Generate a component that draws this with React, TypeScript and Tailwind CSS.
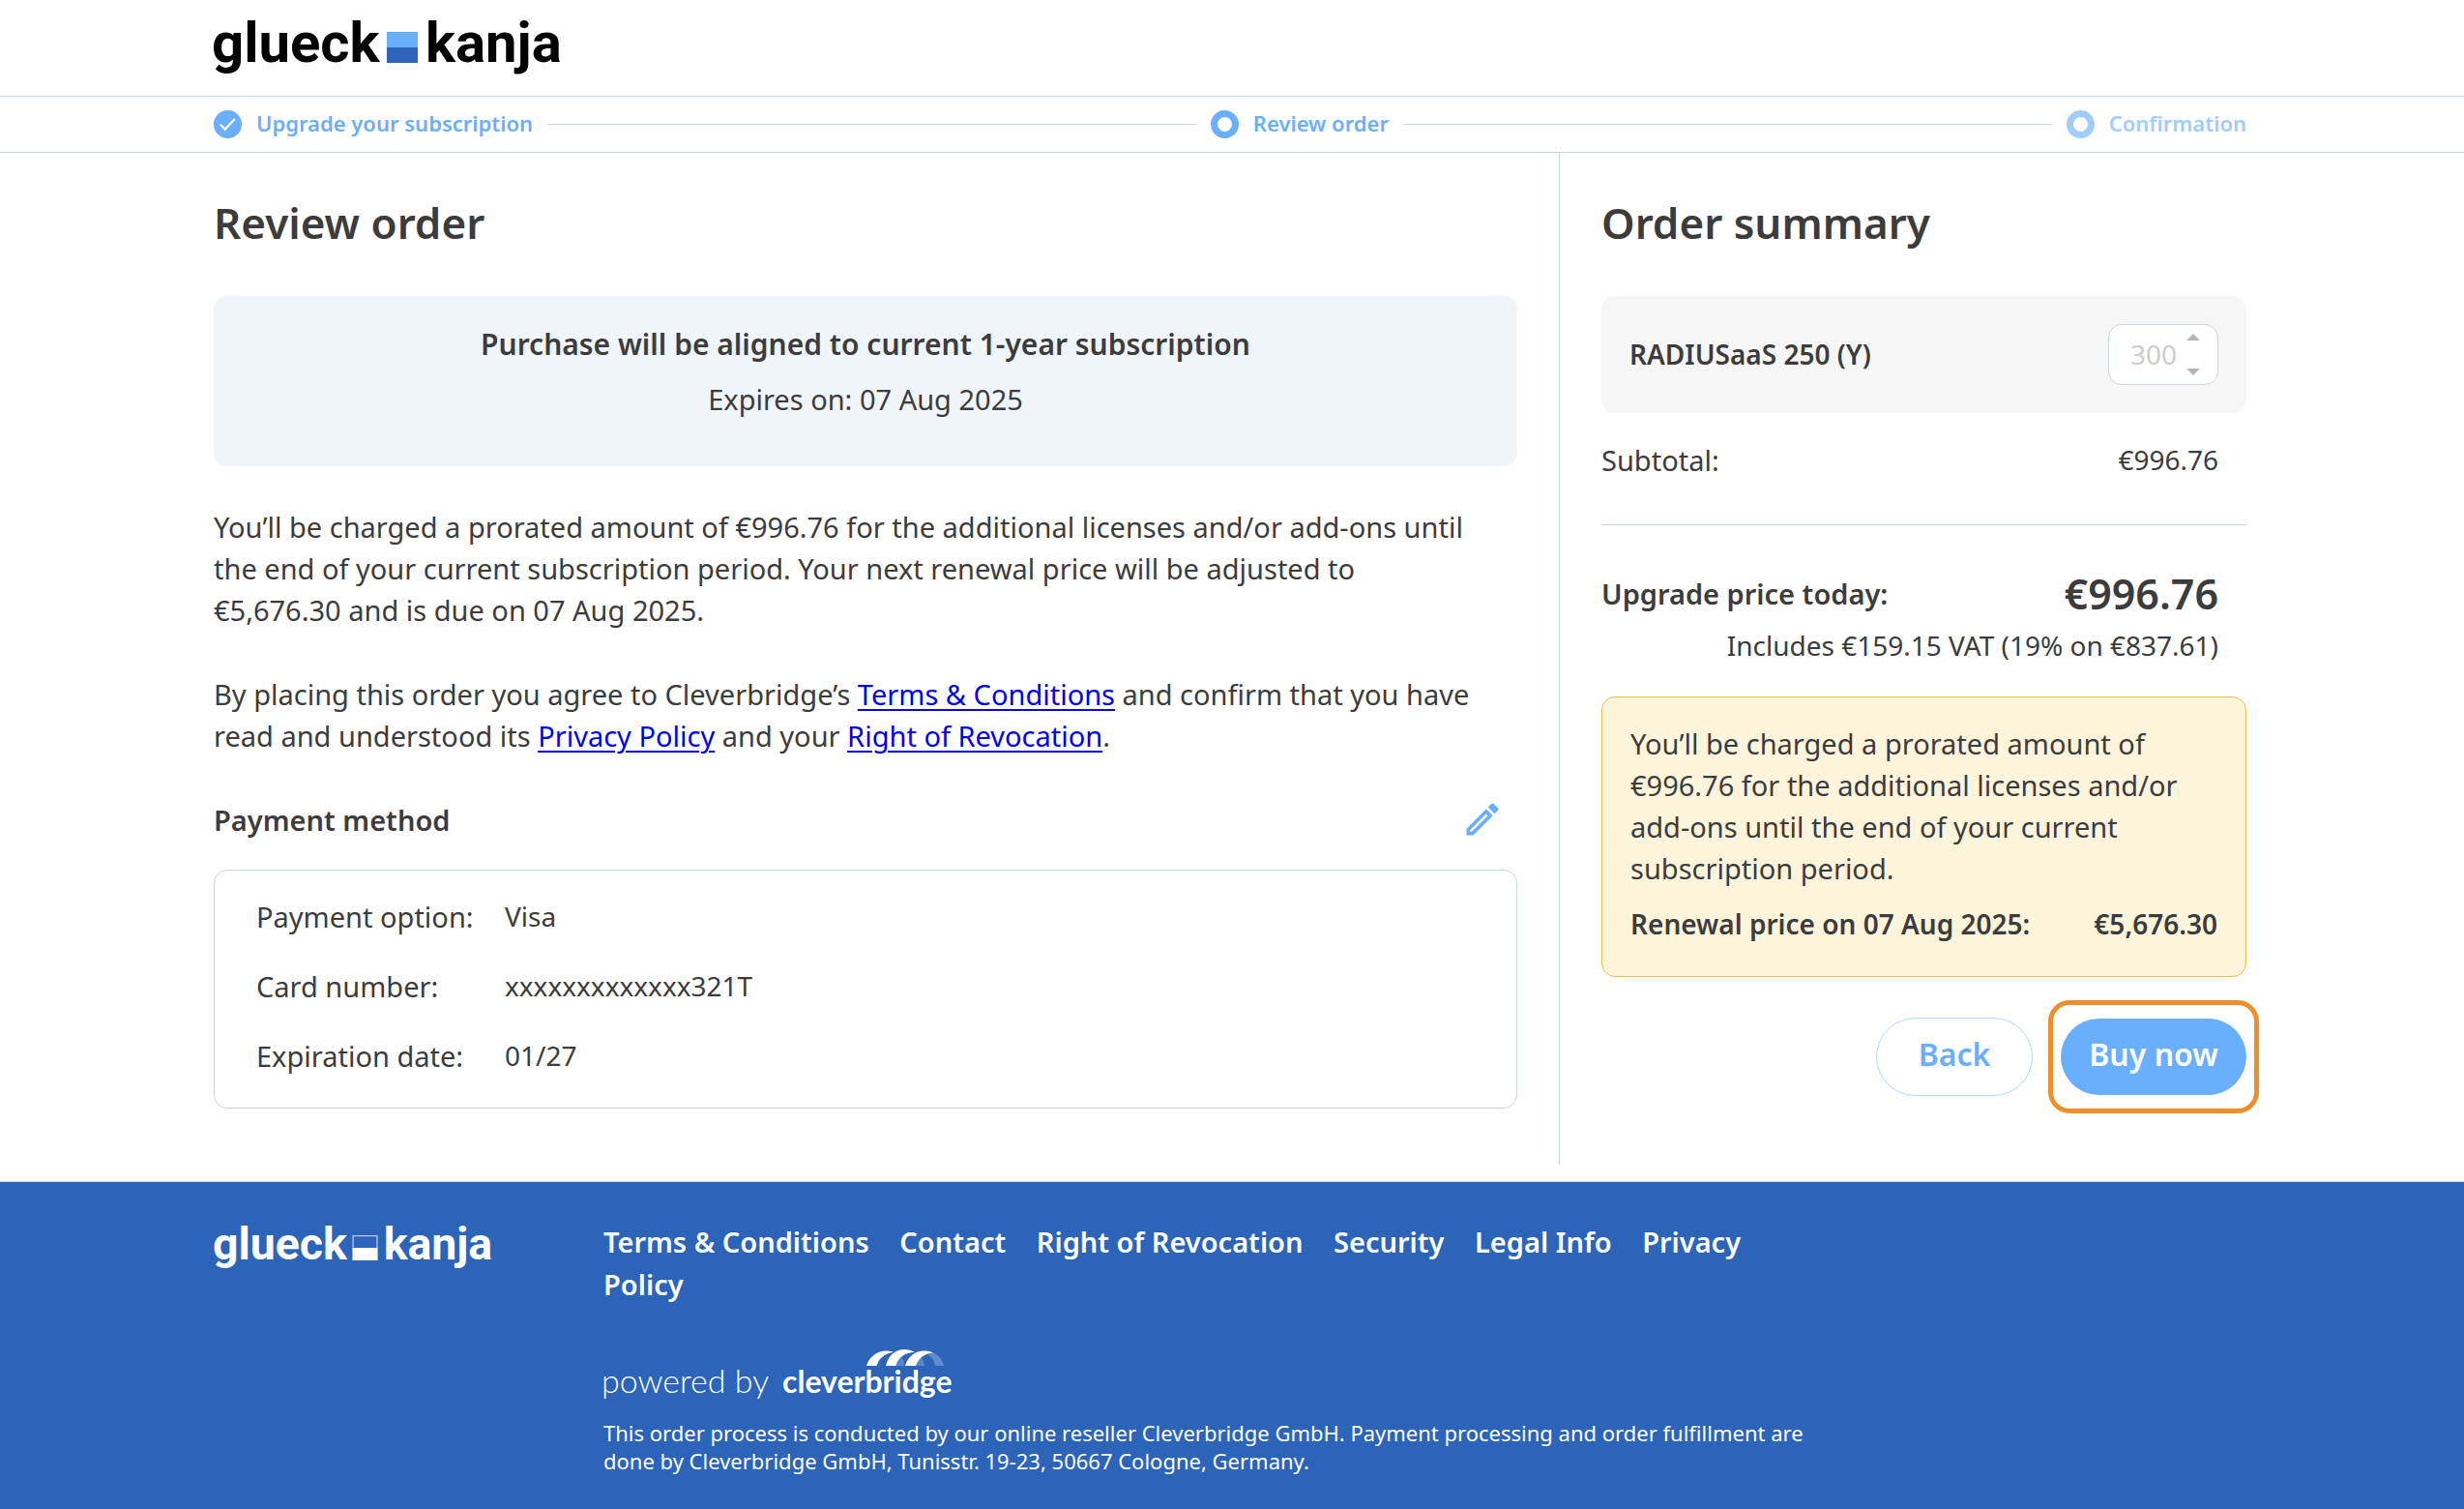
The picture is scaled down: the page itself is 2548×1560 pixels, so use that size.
import type { ReactNode } from "react";

type LogoProps = { className: string; tone: "color" | "white" };

function GlueckKanjaLogo({ className, tone }: LogoProps) {
  const white = tone === "white";
  return (
    <svg viewBox="0 14 370 70" className={className} role="img" aria-label="glueck kanja">
      <g className={white ? "fill-white" : "fill-black"} fontFamily='Roboto, "Liberation Sans", sans-serif' fontWeight="700" fontSize="58">
        <text x="-2" y="64">glueck</text>
        <text x="219" y="64">kanja</text>
      </g>
      {white ? (
        <>
          <rect x="179.5" y="33.5" width="31" height="31" fill="none" stroke="#bdd0ea" strokeWidth="1.5" />
          <rect x="179" y="49" width="32" height="16" fill="#ffffff" />
        </>
      ) : (
        <>
          <rect x="179" y="33" width="32" height="16" fill="#6aaffd" />
          <rect x="179" y="49" width="32" height="16" fill="#2b64b8" />
        </>
      )}
    </svg>
  );
}

function PoweredByLogo() {
  return (
    <svg viewBox="0 0 370 56" className="h-14 w-[370px] overflow-visible" role="img" aria-label="powered by cleverbridge">
      <g fill="#ffffff" fontFamily="Lato, sans-serif">
        <text x="-2" y="47" fontSize="34" fontWeight="300">powered by</text>
        <text x="185" y="47" fontSize="32" fontWeight="700">cleverbridge</text>
      </g>
      <g fill="#ffffff">
        <path d="M272 19C275 9 284 3.5 292 3.5C295 3.5 298 4 300 5C291 6 285 11 282.5 19Z" />
        <path d="M292 19C295 7 303 2 311 2C315 2 319 3 322 5C312 5 305 10 302.5 19Z" />
        <path d="M312 19C315 9 323 3.5 331 3.5C335 3.5 338 4 341 5.5C332 6 326 11 323 19Z" />
        <path d="M341 5.5C347 8 351 13 352 19H343C342 13 339 9 335 7Z" opacity="0.25" />
        <path d="M303 19C304 15 306 12 308.5 10C310 13 311 16 311 19Z" opacity="0.22" />
        <path d="M323.5 19C324.5 15 326 12 328.5 10C330.5 13 331.5 16 332 19Z" opacity="0.22" />
      </g>
    </svg>
  );
}

function PencilIcon() {
  return (
    <svg viewBox="0 0 24 24" className="size-11 fill-[#6aaffd]" aria-hidden="true">
      <path d="M14.06,9L15,9.94L5.92,19H5V18.08L14.06,9M17.66,3C17.41,3 17.15,3.1 16.96,3.29L15.13,5.12L18.88,8.87L20.71,7.04C21.1,6.65 21.1,6 20.71,5.63L18.37,3.29C18.17,3.09 17.92,3 17.66,3M14.06,6.19L3,17.25V21H6.75L17.81,9.94L14.06,6.19Z" />
    </svg>
  );
}

function StepLine() {
  return <li aria-hidden="true" className="h-px flex-1 bg-[#ccd6e0]" />;
}

function Ring({ className }: { className: string }) {
  return <span className={`size-[29px] rounded-full border-[7px] ${className}`} />;
}

function DocLink({ children }: { children: ReactNode }) {
  return (
    <a href="#" className="text-[#0000ee] underline decoration-2 underline-offset-4">
      {children}
    </a>
  );
}

const payment = [
  { label: "Payment option:", value: "Visa" },
  { label: "Card number:", value: "xxxxxxxxxxxxx321T" },
  { label: "Expiration date:", value: "01/27" },
];

const footerLinks = ["Terms & Conditions", "Contact", "Right of Revocation", "Security", "Legal Info", "Privacy Policy"];

export default function App() {
  return (
    <div className="flex min-h-screen flex-col bg-white font-['Noto_Sans',sans-serif] text-[29px] leading-[43px] text-[#3c3c3c]">
      <header className="border-b border-[#ccd6e0] pt-[14px] pb-[15px] pl-[221px]">
        <GlueckKanjaLogo tone="color" className="h-[70px] w-[370px] overflow-visible" />
      </header>

      <nav aria-label="Checkout progress" className="border-b border-[#ccd6e0] pr-[225px] pl-[221px]">
        <ol className="flex h-[57px] items-center gap-[15px] text-[22px] leading-7 font-semibold text-[#6aaffd]">
          <li className="flex items-center gap-[15px]">
            <svg viewBox="0 0 29 29" className="size-[29px]" aria-hidden="true">
              <circle cx="14.5" cy="14.5" r="14.5" fill="#6aaffd" />
              <path d="M6.8 14.8L11.8 19.6L21.8 9" fill="none" stroke="#ffffff" strokeWidth="2.2" />
            </svg>
            <span className="pb-1">Upgrade your subscription</span>
          </li>
          <StepLine />
          <li aria-current="step" className="flex items-center gap-[15px]">
            <Ring className="border-[#6aaffd]" />
            <span className="pb-1">Review order</span>
          </li>
          <StepLine />
          <li className="flex items-center gap-[15px] text-[#a0cdfb]">
            <Ring className="border-[#a0cdfb]" />
            <span className="pb-1">Confirmation</span>
          </li>
        </ol>
      </nav>

      <main className="flex pr-[225px] pb-[17px] pl-[221px]">
        <section className="flex-1 pt-11 pr-[43px]">
          <h1 className="text-[44px] leading-[56px] font-semibold">Review order</h1>

          <div className="mt-12 rounded-[14px] bg-[#f0f4fb] pt-7 pb-12 text-center">
            <p className="text-[30px] font-semibold">Purchase will be aligned to current 1-year subscription</p>
            <p className="mt-[14px]">Expires on: 07 Aug 2025</p>
          </div>

          <p className="mt-[41px] pr-10">
            You’ll be charged a prorated amount of €996.76 for the additional licenses and/or add-ons until the end of your
            current subscription period. Your next renewal price will be adjusted to €5,676.30 and is due on 07 Aug 2025.
          </p>
          <p className="mt-11">
            By placing this order you agree to Cleverbridge’s <DocLink>Terms &amp; Conditions</DocLink> and confirm that you
            have read and understood its <DocLink>Privacy Policy</DocLink> and your <DocLink>Right of Revocation</DocLink>.
          </p>

          <div className="mt-[43px] flex items-center justify-between pr-[14px]">
            <h2 className="text-[29px] font-semibold">Payment method</h2>
            <button type="button" aria-label="Edit payment method">
              <PencilIcon />
            </button>
          </div>

          <dl className="mt-[30px] grid grid-cols-[257px_1fr] gap-y-[29px] rounded-[14px] border border-[#ccd6e0] pt-[26px] pb-8 pl-[43px]">
            {payment.map((row) => (
              <div key={row.label} className="contents">
                <dt>{row.label}</dt>
                <dd className="text-[28px]">{row.value}</dd>
              </div>
            ))}
          </dl>
        </section>

        <aside className="w-[711px] border-l border-[#ccd6e0] pt-11 pb-[71px] pl-[43px]">
          <h2 className="text-[44px] leading-[56px] font-semibold">Order summary</h2>

          <div className="mt-12 flex items-center justify-between rounded-[14px] bg-[#f6f6f6] p-[29px]">
            <label htmlFor="quantity" className="text-[28px] font-semibold">
              RADIUSaaS 250 (Y)
            </label>
            <div className="flex h-[63px] w-[114px] items-center rounded-[14px] border border-[#ccd6e0] bg-white pl-[22px]">
              <input
                id="quantity"
                type="text"
                inputMode="numeric"
                disabled
                defaultValue="300"
                className="w-[58px] bg-transparent text-[28px] text-[#cccccc]"
              />
              <div className="flex flex-col gap-[29px]">
                <button type="button" disabled aria-label="Increase quantity">
                  <svg viewBox="0 0 14 7" className="block h-[7px] w-[14px] fill-[#b3b5b9]">
                    <path d="M7 0L14 7H0Z" />
                  </svg>
                </button>
                <button type="button" disabled aria-label="Decrease quantity">
                  <svg viewBox="0 0 14 7" className="block h-[7px] w-[14px] fill-[#b3b5b9]">
                    <path d="M0 0H14L7 7Z" />
                  </svg>
                </button>
              </div>
            </div>
          </div>

          <div className="mt-[27px] flex justify-between border-b border-[#ccd6e0] pr-[29px] pb-[45px]">
            <span>Subtotal:</span>
            <span className="text-[28px]">€996.76</span>
          </div>

          <div className="mt-10 flex h-[60px] items-center justify-between pr-[29px] font-semibold">
            <span>Upgrade price today:</span>
            <strong className="text-[43px] font-semibold">€996.76</strong>
          </div>
          <p className="mt-[3px] pr-[29px] text-right text-[28px]">Includes €159.15 VAT (19% on €837.61)</p>

          <div className="mt-[31px] rounded-[14px] border border-[#e8c04a] bg-[#fdf4dc] px-[29px] pt-[26px] pb-8">
            <p>
              You’ll be charged a prorated amount of €996.76 for the additional licenses and/or add-ons until the end of your
              current subscription period.
            </p>
            <p className="mt-[15px] flex justify-between text-[28px] font-semibold">
              <span>Renewal price on 07 Aug 2025:</span>
              <span>€5,676.30</span>
            </p>
          </div>

          <div className="mt-[42px] flex items-center justify-end gap-[29px] text-[32px] font-semibold">
            <button
              type="button"
              className="h-[81px] w-[162px] rounded-full border border-[#b4d7fe] pb-1.5 text-[#6aaffd]"
            >
              Back
            </button>
            <div className="relative">
              <button type="button" className="h-[79px] w-[192px] rounded-full bg-[#6aaffd] pb-1.5 text-white">
                Buy now
              </button>
              <span className="pointer-events-none absolute -inset-x-[13px] -inset-y-[19px] rounded-[22px] border-[5px] border-[#ee8f2b]" />
            </div>
          </div>
        </aside>
      </main>

      <footer className="flex flex-1 border-t border-[#ccd6e0] bg-[#2b64b8] pt-10 pr-[225px] pb-[35px] pl-[221px] text-white">
        <div className="w-[403px]">
          <GlueckKanjaLogo tone="white" className="h-[56px] w-[297px] overflow-visible" />
        </div>
        <div className="max-w-[1265px] flex-1">
          <nav aria-label="Legal" className="leading-[44px] font-semibold">
            {footerLinks.map((link) => (
              <span key={link}>
                <a href="#" className="mr-6">
                  {link}
                </a>{" "}
              </span>
            ))}
          </nav>
          <div className="mt-[43px]">
            <PoweredByLogo />
          </div>
          <p className="mt-[18px] text-[22px] leading-[29px]">
            This order process is conducted by our online reseller Cleverbridge GmbH. Payment processing and order fulfillment
            are done by Cleverbridge GmbH, Tunisstr. 19-23, 50667 Cologne, Germany.
          </p>
        </div>
      </footer>
    </div>
  );
}
